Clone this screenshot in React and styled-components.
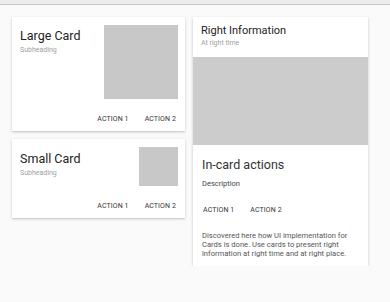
import React from "react";
import styled, { createGlobalStyle } from "styled-components";

const Global = createGlobalStyle`
  body {
    margin: 0;
    background: #fafafa;
    font-family: Roboto, "Liberation Sans", Arial, sans-serif;
  }
`;

const TopStrip = styled.div`
  height: 4px;
  background: #ececec;
  border-bottom: 1px solid #c9c9c9;
`;

const Page = styled.div`
  display: flex;
  align-items: flex-start;
  gap: 8px;
  padding: 12px 0 0 12px;
`;

const Column = styled.div`
  display: flex;
  flex-direction: column;
  gap: 8px;
  width: 173px;
`;

const Card = styled.div`
  background: #fff;
  width: ${(p) => p.$width || "100%"};
  box-shadow: 0 1px 3px rgba(0, 0, 0, 0.18), 0 1px 1px rgba(0, 0, 0, 0.06);
`;

const Header = styled.div`
  display: flex;
  justify-content: space-between;
  align-items: flex-start;
  padding: 8px 7px 0 8px;
`;

const TextBlock = styled.div`
  padding-top: ${(p) => p.$top || 4}px;
`;

const Title = styled.div`
  font-size: 12.5px;
  line-height: 14px;
  color: #222;
`;

const Sub = styled.div`
  font-size: 7px;
  line-height: 9px;
  color: #a0a0a0;
  margin-top: 3px;
`;

const Thumb = styled.div`
  width: ${(p) => p.$size}px;
  height: ${(p) => p.$size}px;
  background: #c8c8c8;
`;

const Actions = styled.div`
  display: flex;
  justify-content: ${(p) => (p.$left ? "flex-start" : "flex-end")};
  gap: 16px;
  padding: ${(p) => p.$pad || "16px 9px 7px"};
`;

const Action = styled.span`
  font-size: 7px;
  line-height: 9px;
  color: #333;
  text-transform: uppercase;
  letter-spacing: 0.1px;
`;

const InfoHead = styled.div`
  padding: 7px 8px 9px 8px;
`;

const InfoTitle = styled.div`
  font-size: 11px;
  line-height: 13px;
  color: #222;
`;

const InfoSub = styled.div`
  font-size: 7px;
  line-height: 9px;
  color: #a0a0a0;
  margin-top: 2px;
`;

const Media = styled.div`
  height: 88px;
  background: #cccccc;
`;

const Body = styled.div`
  padding: 13px 8px 8px 9px;
`;

const BodyTitle = styled.div`
  font-size: 12.5px;
  line-height: 14px;
  color: #333;
`;

const Desc = styled.div`
  font-size: 7.5px;
  line-height: 10px;
  color: #444;
  margin-top: 7px;
`;

const Para = styled.p`
  margin: 0;
  font-size: 7.6px;
  line-height: 9px;
  color: #555;
  width: 156px;
`;

export default function App() {
  return (
    <>
      <Global />
      <TopStrip />
      <Page>
        <Column>
          <Card>
            <Header>
              <TextBlock>
                <Title>Large Card</Title>
                <Sub>Subheading</Sub>
              </TextBlock>
              <Thumb $size={74} />
            </Header>
            <Actions>
              <Action>Action 1</Action>
              <Action>Action 2</Action>
            </Actions>
          </Card>
          <Card>
            <Header>
              <TextBlock $top={5}>
                <Title>Small Card</Title>
                <Sub>Subheading</Sub>
              </TextBlock>
              <Thumb $size={39} />
            </Header>
            <Actions>
              <Action>Action 1</Action>
              <Action>Action 2</Action>
            </Actions>
          </Card>
        </Column>
        <Card $width="175px">
          <InfoHead>
            <InfoTitle>Right Information</InfoTitle>
            <InfoSub>At right time</InfoSub>
          </InfoHead>
          <Media />
          <Body>
            <BodyTitle>In-card actions</BodyTitle>
            <Desc>Description</Desc>
            <Actions $left $pad="17px 0 16px 1px">
              <Action>Action 1</Action>
              <Action>Action 2</Action>
            </Actions>
            <Para>
              Discovered here how UI implementation for Cards is done. Use cards
              to present right information at right time and at right place.
            </Para>
          </Body>
        </Card>
      </Page>
    </>
  );
}
